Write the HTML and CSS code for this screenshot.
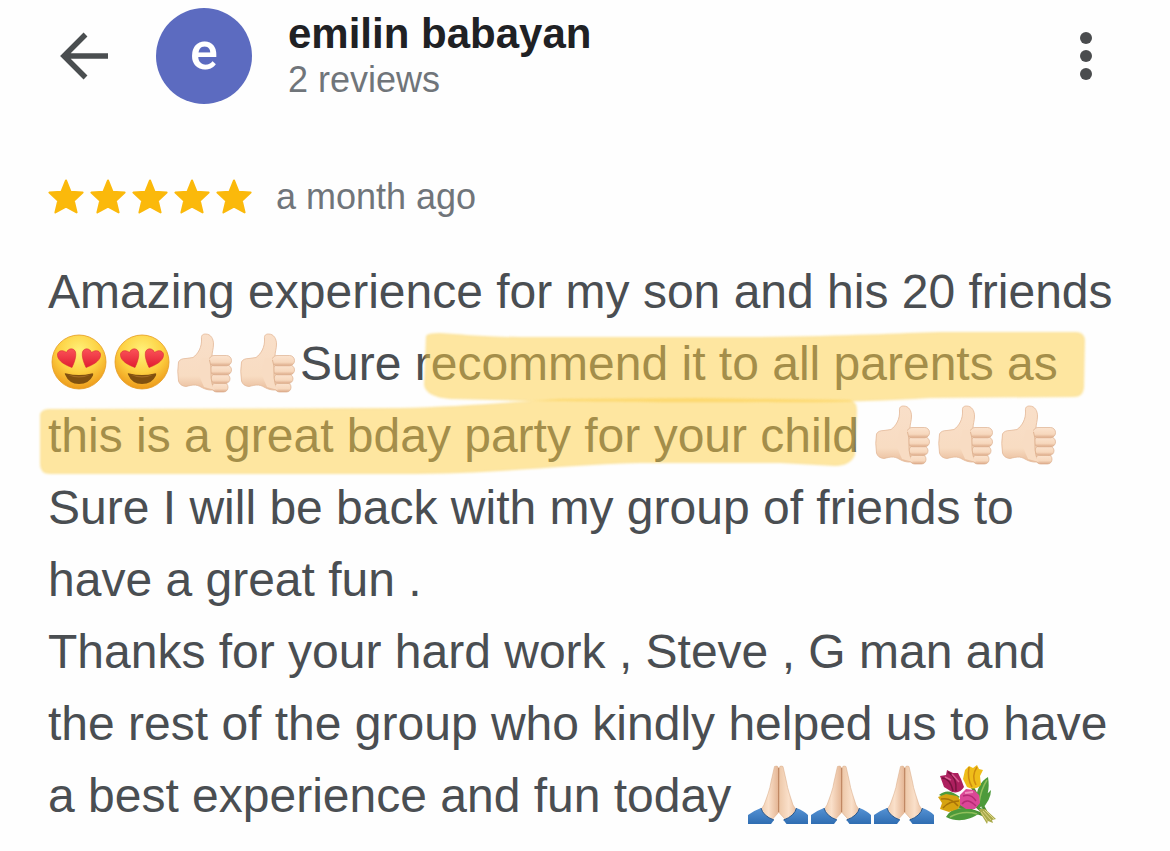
FILE: index.html
```html
<!DOCTYPE html>
<html lang="en">
<head>
<meta charset="utf-8">
<meta name="viewport" content="width=device-width, initial-scale=1">
<title>Review by emilin babayan</title>
<link rel="stylesheet" href="styles.css">
</head>
<body>
<svg class="defs" aria-hidden="true">
  <defs>
    <radialGradient id="face" cx=".5" cy=".3" r=".72">
      <stop offset="0" stop-color="#fff27a"/><stop offset=".55" stop-color="#fdd041"/><stop offset="1" stop-color="#ec9618"/>
    </radialGradient>
    <linearGradient id="heart" x1="0" y1="0" x2="0" y2="1">
      <stop offset="0" stop-color="#fb5358"/><stop offset="1" stop-color="#e11d32"/>
    </linearGradient>
    <linearGradient id="skin" x1="0" y1="0" x2="0" y2="1">
      <stop offset="0" stop-color="#f9dfc9"/><stop offset=".75" stop-color="#f8dcc2"/><stop offset="1" stop-color="#e9bd9c"/>
    </linearGradient>
    <linearGradient id="finger" x1="0" y1="0" x2="0" y2="1">
      <stop offset="0" stop-color="#fbe3cf"/><stop offset=".65" stop-color="#f7d8bd"/><stop offset="1" stop-color="#dca988"/>
    </linearGradient>
    <linearGradient id="palm" x1="0" y1="0" x2="1" y2="0">
      <stop offset="0" stop-color="#ecc6a6"/><stop offset=".5" stop-color="#fae0ca"/><stop offset="1" stop-color="#e3b391"/>
    </linearGradient>
    <linearGradient id="sleeve" x1="0" y1="0" x2="0" y2="1">
      <stop offset="0" stop-color="#5592d4"/><stop offset="1" stop-color="#2f6db2"/>
    </linearGradient>
    <symbol id="star" viewBox="0 0 36 36">
      <path d="M18 1.500 22.600 12.800 34.600 13.600 25.800 21.800 28.600 33.400 18 27.600 7.400 33.400 10.200 21.800 1.400 13.600 13.400 12.800Z" fill="#fbb90b" stroke="#fbb90b" stroke-width="2" stroke-linejoin="round"/>
    </symbol>
    <symbol id="heart-eyes" viewBox="0 0 63 64">
      <circle cx="31" cy="31" r="27" fill="url(#face)" stroke="#e59a20" stroke-width=".8"/>
      <g fill="url(#heart)" stroke="#d92b32" stroke-width=".6">
        <path d="M24 36.500C17 34 10 30 9.500 24.500 9 20 14 18 18.500 21.500 20 17 26 16.500 27.500 21 28.500 26 26 32 24 36.500Z"/>
        <path d="M38 36.500C36 32 33.500 26 34.500 21 36 16.500 42 17 43.500 21.500 48 18 53 20 52.500 24.500 52 30 45 34 38 36.500Z"/>
      </g>
      <path d="M17 43.500Q16 41.800 18.500 42.500 31 45.500 43.500 42.500 46 41.800 45 44.500 41 53 31 53 21 53 17 43.500Z" fill="#80500f"/>
      <path d="M19 43.500Q31 47 43 43.500 31 49.500 19 43.500Z" fill="#a16b25"/>
    </symbol>
    <symbol id="thumb" viewBox="0 0 63 64">
      <path d="M4.500 31Q6 27.500 12 27.500L19 26.500C24 23 28 16 27.500 8 27 4 29 3 31.500 3 37 3 39.500 8 39.500 13 39.500 18 38 21 38 25L43 29 43 58C38 60 32 59 27 56 22 53 18 54 12 55.500Q6 55 4.500 50 3 40 4.500 31Z" fill="url(#skin)" stroke="#e3b797" stroke-width=".8"/>
      <g fill="url(#finger)" stroke="#ddb08f" stroke-width=".7">
        <rect x="38" y="51.500" width="16" height="9.500" rx="4.500"/>
        <rect x="37" y="43" width="19" height="9.500" rx="4.700"/>
        <rect x="36" y="34" width="21.500" height="9.800" rx="4.800"/>
        <rect x="35" y="24.500" width="22.500" height="10.300" rx="5"/>
      </g>
      <path d="M35 27C38 32 36 38 37 43 37 50 37 54 41 59L30 56 24 42 28 27Z" fill="#f8dcc3"/>
      <path d="M35.500 29Q37.500 35 37 41 36.500 47 38.500 54" fill="none" stroke="#e1b594" stroke-width="1"/>
    </symbol>
    <symbol id="pray" viewBox="0 0 63 64">
      <path d="M29.500 3.500Q33.500 2 33.500 6L34 49 23 61 13 51 19 42C22 34 25 26 26 19Z" fill="url(#palm)" stroke="#dcae8c" stroke-width=".6"/>
      <path d="M38 3.500Q34 2 34 6L33.500 49 44.500 61 54 51 48 42C45.500 34 42.500 26 41.500 19Z" fill="url(#palm)" stroke="#dcae8c" stroke-width=".6"/>
      <path d="M33.700 5V49" stroke="#b97e59" stroke-width="1"/>
      <path d="M3 52Q8 48 16 45 18 53 29 57L26 61H3Z" fill="url(#sleeve)"/>
      <path d="M63 52Q59 48 51.500 45 49.500 53 38.500 57L41.500 61H63Z" fill="url(#sleeve)"/>
      <path d="M16 45Q18 53 29 57M51.500 45Q49.500 53 38.500 57" fill="none" stroke="#27588f" stroke-width="1"/>
    </symbol>
    <symbol id="bouquet" viewBox="0 0 63 64">
      <path d="M30 32 51 51M36 20 52 49M22 42 50 52" stroke="#4e8b32" stroke-width="3" fill="none"/>
      <path d="M42 39C42 26 47 18 54 14 56 26 54 36 45 46ZM12 54C18 44 30 42 46 50 36 57 24 60 12 54ZM5 32Q14 24 26 34L18 38ZM51 33 57 27Q57 37 47 47Z" fill="#4d9a3b"/>
      <path d="M45 40Q47 26 53 17M16 54Q29 47 43 51" stroke="#91bf5c" stroke-width="1.500" fill="none"/>
      <path d="M45 46 51 46 62 56 58 57 59 60 54 58 53 61 47 51Z" fill="#a9ab4c"/>
      <path d="M49 48 57 57M51 47 60 56M47 49 54 59" stroke="#dfd488" stroke-width="1" fill="none"/>
      <path d="M31 7 35 3 39 5 43 2 45 6 49 7 46 13 47 22Q41 28 33 24L29 16Z" fill="#efbd19"/>
      <path d="M35 4Q33 16 38 24M43 4Q37 13 42 22" stroke="#cf8c0e" stroke-width="1.500" fill="none"/>
      <path d="M6 13 12 12 13 7 19 10 24 10 27 16 30 24Q26 31 18 29L10 24Z" fill="#ad205f"/>
      <path d="M8 15Q16 15 19 28M14 9Q23 14 22 28" stroke="#78133f" stroke-width="1.500" fill="none"/>
      <path d="M11 14 17 17M18 11 25 19" stroke="#d85a8f" stroke-width="1.500"/>
      <path d="M4 34 12 31 23 33 28 39 24 46 15 49 6 46 8 40Z" fill="#d6a310"/>
      <path d="M7 36Q17 34 24 43M9 45Q15 38 25 38" stroke="#a87408" stroke-width="1.500" fill="none"/>
      <path d="M26 32 32 26 40 27 45 32 46 40 41 46 32 46 26 42Z" fill="#db4796"/>
      <path d="M29 33Q37 30 42 38M28 41Q33 34 42 43" stroke="#b52b74" stroke-width="1.500" fill="none"/>
      <path d="M31 30 39 29" stroke="#f28dbd" stroke-width="2"/>
    </symbol>
  </defs>
</svg>

<main class="review">
  <header class="top">
    <button class="icon-button" type="button" aria-label="Back">
      <svg class="back" viewBox="0 0 48 48"><path d="M25.500 2.500 4 24 25.500 45.500M4 24H48" fill="none" stroke="#4a4e50" stroke-width="5.500"/></svg>
    </button>
    <div class="avatar" aria-hidden="true">e</div>
    <div class="author">
      <h1 class="name">emilin babayan</h1>
      <p class="count">2 reviews</p>
    </div>
    <button class="icon-button more" type="button" aria-label="More options">
      <svg class="dots" viewBox="0 0 12 48" fill="#4a4c4e"><circle cx="6" cy="6" r="6"/><circle cx="6" cy="24" r="6"/><circle cx="6" cy="42" r="6"/></svg>
    </button>
  </header>

  <div class="rating">
    <div class="stars" role="img" aria-label="5 out of 5 stars">
      <svg class="star"><use href="#star"/></svg>
      <svg class="star"><use href="#star"/></svg>
      <svg class="star"><use href="#star"/></svg>
      <svg class="star"><use href="#star"/></svg>
      <svg class="star"><use href="#star"/></svg>
    </div>
    <span class="date">a month ago</span>
  </div>

  <div class="comment">
    <p class="text">Amazing experience for my son and his 20 friends<br>
      <svg class="emoji"><use href="#heart-eyes"/></svg><svg class="emoji"><use href="#heart-eyes"/></svg><svg class="emoji"><use href="#thumb"/></svg><svg class="emoji"><use href="#thumb"/></svg>Sure recommend it to all parents as<br>
      this is a great bday party for your child <svg class="emoji"><use href="#thumb"/></svg><svg class="emoji"><use href="#thumb"/></svg><svg class="emoji"><use href="#thumb"/></svg><br>
      Sure I will be back with my group of friends to<br>
      have a great fun .</p>
    <p class="text">Thanks for your hard work , Steve , G man and<br>
      the rest of the group who kindly helped us to have<br>
      a best experience and fun today <svg class="emoji"><use href="#pray"/></svg><svg class="emoji"><use href="#pray"/></svg><svg class="emoji"><use href="#pray"/></svg><svg class="emoji"><use href="#bouquet"/></svg></p>
    <svg class="marker" viewBox="0 320 1170 160" aria-hidden="true">
      <path d="M426 336Q427 333 440 333C460 334 480 337 520 337L760 337C850 336 900 333 940 332L1076 332Q1084 332 1085 340L1084 388Q1083 397 1074 397L930 398C880 401 830 403 760 402 650 403 590 401 530 401L450 399Q426 397 424 385Z"/>
      <path d="M40 414Q42 409 50 409L400 408C450 407 500 403 560 399L700 398 850 400Q857 402 857 410L855 455Q850 466 835 466L780 463 640 463C560 465 500 474 400 474L50 474Q40 474 40 464Z"/>
    </svg>
  </div>
</main>
</body>
</html>
```
FILE: styles.css
```css
* {
  box-sizing: border-box;
}

body {
  margin: 0;
  background: #fefefe;
  color: #4a4e52;
  font-family: "Liberation Sans", Arial, sans-serif;
}

.defs {
  position: absolute;
  width: 0;
  height: 0;
}

.review {
  padding: 8px 0 16px 48px;
}

.top {
  display: flex;
  align-items: center;
  padding-right: 78px;
}

.icon-button {
  display: flex;
  padding: 0;
  border: 0;
  background: none;
}

.back {
  width: 48px;
  height: 48px;
}

.top .icon-button:first-child {
  padding: 0 48px 0 12px;
}

.more {
  margin-left: auto;
}

.dots {
  width: 12px;
  height: 48px;
}

.avatar {
  display: flex;
  justify-content: center;
  width: 96px;
  height: 96px;
  border-radius: 50%;
  background: #5c6bc0;
  color: #fff;
  font: 500 52px/88px Roboto, sans-serif;
}

.author {
  margin-left: 36px;
}

.name,
.count {
  margin: 0;
}

.name {
  color: #202124;
  font-size: 42px;
  line-height: 48px;
}

.count {
  color: #70757a;
  font-size: 36px;
  line-height: 44px;
}

.rating {
  display: flex;
  align-items: center;
  gap: 24px;
  margin-top: 72px;
  line-height: 42px;
}

.stars {
  display: flex;
  gap: 6px;
}

.star {
  width: 36px;
  height: 36px;
}

.date {
  color: #70757a;
  font-size: 36px;
}

.comment {
  position: relative;
  margin-top: 38px;
}

.text {
  margin: 0;
  font-size: 48px;
  line-height: 72px;
}

.emoji {
  width: 63px;
  height: 64px;
  margin: -8px 0;
  vertical-align: -7px;
}

.marker {
  position: absolute;
  top: 64px;
  left: -48px;
  width: 1170px;
  height: 160px;
  fill: rgb(253 205 65 / 50%);
  filter: blur(1px);
  pointer-events: none;
}
```
